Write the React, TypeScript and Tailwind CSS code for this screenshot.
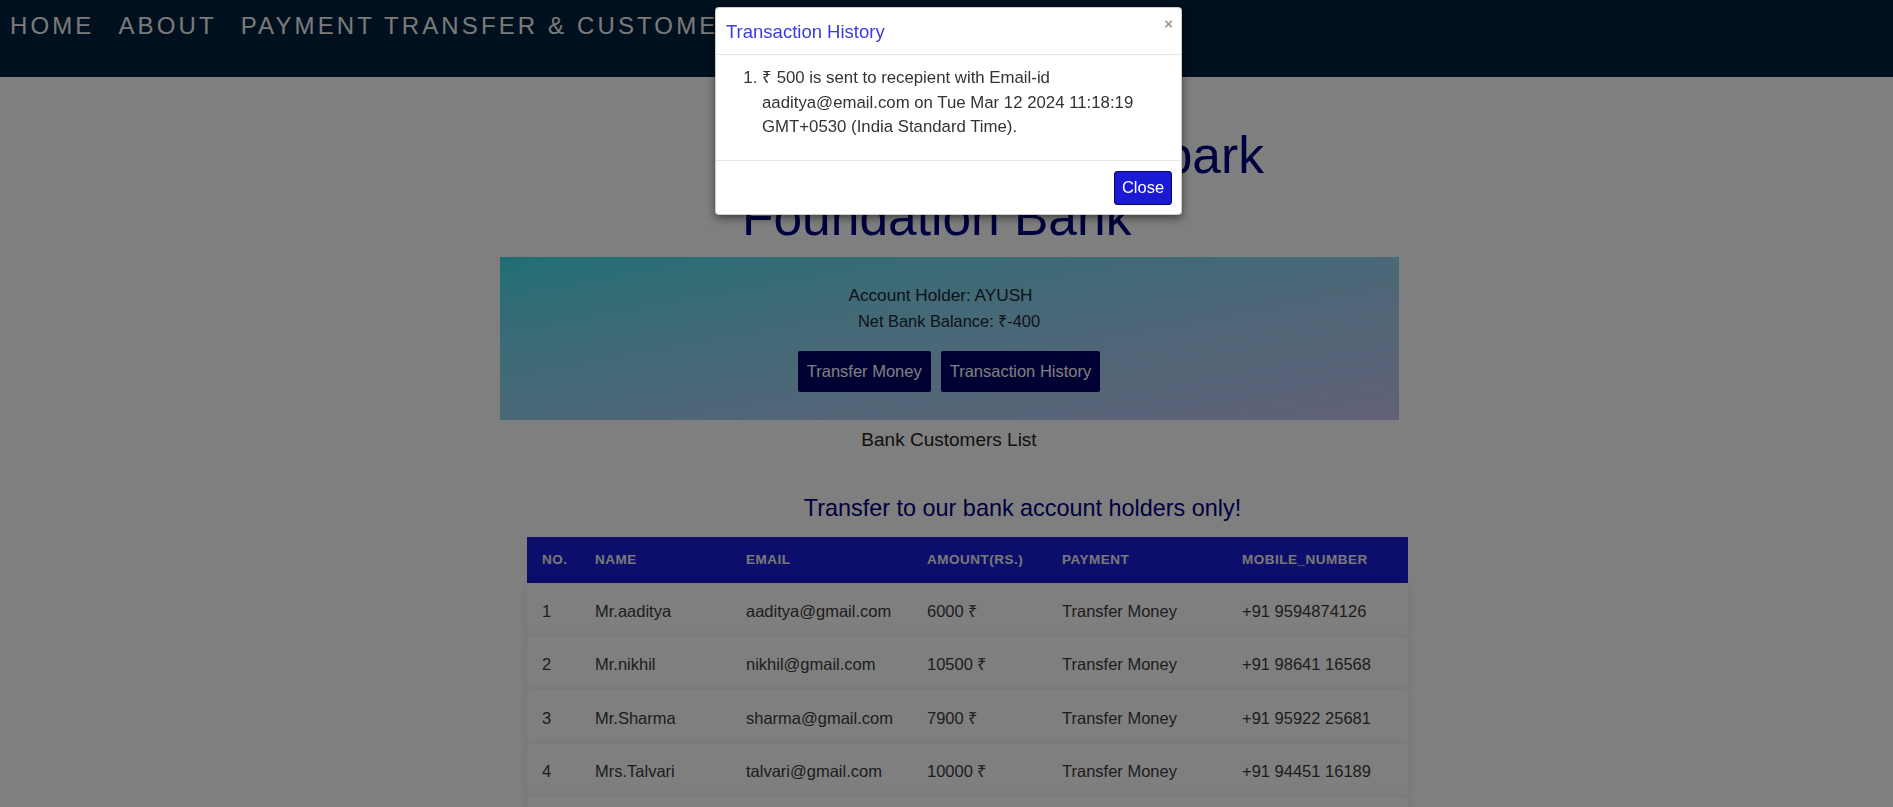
import React from "react";

const customers = [
  { no: 1, name: "Mr.aaditya", email: "aaditya@gmail.com", amount: "6000 ₹", mobile: "+91 9594874126" },
  { no: 2, name: "Mr.nikhil", email: "nikhil@gmail.com", amount: "10500 ₹", mobile: "+91 98641 16568" },
  { no: 3, name: "Mr.Sharma", email: "sharma@gmail.com", amount: "7900 ₹", mobile: "+91 95922 25681" },
  { no: 4, name: "Mrs.Talvari", email: "talvari@gmail.com", amount: "10000 ₹", mobile: "+91 94451 16189" },
  { no: 5, name: "Mr.Verma", email: "verma@gmail.com", amount: "8200 ₹", mobile: "+91 98200 45127" },
];

const cols = ["w-[53px]", "w-[151px]", "w-[181px]", "w-[135px]", "w-[180px]", "w-[181px]"];

export default function App() {
  return (
    <div className="relative min-h-screen bg-white font-['Liberation_Sans',Arial,sans-serif] text-[#333]">
      {/* Navbar */}
      <nav className="h-[77px] bg-[#00203e] pl-[10px] pt-[12px] flex gap-[24px] text-[24px] leading-[28px] tracking-[0.13em] text-[#f4f4f4] whitespace-nowrap overflow-hidden">
        <span>HOME</span>
        <span>ABOUT</span>
        <span>PAYMENT TRANSFER &amp; CUSTOMER LIST</span>
      </nav>

      <div className="pl-[5px]">
        {/* Heading */}
        <div className="flex justify-center mt-[47px]">
          <h1 className="w-[414px] whitespace-nowrap text-[51.5px] leading-[62px] text-[#000080]">
            Welcome to The Spark
            <br />
            Foundation Bank
          </h1>
        </div>

        {/* Account card */}
        <div className="w-[899px] mx-auto mt-[9px] pt-[28px] pb-[28px] bg-gradient-to-br from-[#3ddde9] to-[#c4c2f4] text-center text-[#202535]">
          <p className="pr-[17px] text-[17.2px] leading-[21px]">Account Holder: AYUSH</p>
          <p className="mt-[6px] text-[16.4px] leading-[18px]">Net Bank Balance: ₹-400</p>
          <div className="mt-[21px] flex justify-center gap-[10px]">
            <button className="h-[41px] px-[9px] bg-[#000066] text-white text-[16.5px] rounded-[2px]">Transfer Money</button>
            <button className="h-[41px] px-[9px] bg-[#000066] text-white text-[16.5px] rounded-[2px]">Transaction History</button>
          </div>
        </div>

        <p className="mt-[9px] text-center text-[19px] leading-[22px] text-[#222]">Bank Customers List</p>
      </div>

      <h3 className="mt-[44px] pl-[152px] text-center text-[23.4px] leading-[26px] text-[#000080]">
        Transfer to our bank account holders only!
      </h3>

      {/* Customers table */}
      <div className="w-[923px] mx-auto mt-[16px] pl-[42px]">
        <div className="flex h-[46px] items-center bg-[#1a1ad6] text-[13.5px] tracking-[0.5px] font-bold uppercase text-[#f0f0f0]">
          {["No.", "Name", "Email", "Amount(Rs.)", "Payment", "Mobile_Number"].map((h, i) => (
            <div key={h} className={cols[i] + " pl-[15px]"}>
              {h}
            </div>
          ))}
        </div>
        {customers.map((c) => (
          <div
            key={c.no}
            className="flex h-[53.5px] items-center pt-[3px] bg-white text-[16.5px] text-[#3a3a3a] shadow-[0_0_9px_0_rgba(0,0,0,0.1)]"
          >
            <div className={cols[0] + " pl-[15px]"}>{c.no}</div>
            <div className={cols[1] + " pl-[15px]"}>{c.name}</div>
            <div className={cols[2] + " pl-[15px]"}>{c.email}</div>
            <div className={cols[3] + " pl-[15px]"}>{c.amount}</div>
            <div className={cols[4] + " pl-[15px]"}>Transfer Money</div>
            <div className={cols[5] + " pl-[15px]"}>{c.mobile}</div>
          </div>
        ))}
      </div>

      {/* Modal backdrop */}
      <div className="fixed inset-0 bg-black/50" />

      {/* Transaction history modal */}
      <div className="fixed inset-0 flex justify-center items-start pl-[4px]">
        <div className="w-[467px] mt-[7px] bg-white rounded-[4px] border border-black/20 shadow-[0_3px_9px_rgba(0,0,0,0.5)]">
          <div className="h-[47px] pl-[10px] pr-[8px] pt-[13px] flex justify-between border-b border-[#e5e5e5]">
            <h4 className="text-[18.5px] leading-[21px] text-[#3b3bdf]">Transaction History</h4>
            <span className="-mt-[3px] text-[15px] leading-[12px] font-bold text-[#9a9a9a]">×</span>
          </div>
          <div className="h-[105px] pl-[15px] pt-[11px]">
            <ol className="list-decimal pl-[31px] text-[16.8px] leading-[24.5px] text-[#333]">
              <li>
                ₹ 500 is sent to recepient with Email-id
                <br />
                aaditya@email.com on Tue Mar 12 2024 11:18:19
                <br />
                GMT+0530 (India Standard Time).
              </li>
            </ol>
          </div>
          <div className="h-[54px] pr-[9px] flex items-center justify-end border-t border-[#e5e5e5]">
            <button className="h-[34px] w-[58px] bg-[#1a1ad6] border border-[#0a0a55] rounded-[3px] text-white text-[16.5px]">
              Close
            </button>
          </div>
        </div>
      </div>
    </div>
  );
}
